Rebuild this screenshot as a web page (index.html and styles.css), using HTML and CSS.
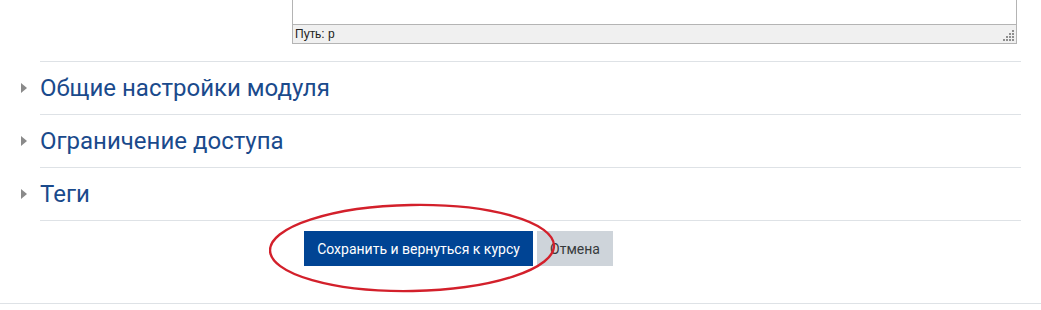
FILE: index.html
```html
<!DOCTYPE html>
<html lang="ru">
<head>
<meta charset="utf-8">
<title>Форма</title>
<link rel="stylesheet" href="styles.css">
</head>
<body>
<div class="page">
  <div class="editor">
    <div class="editor-body"></div>
    <div class="statusbar">
      <span class="path">Путь: p</span>
      <svg class="grip" width="12" height="12" viewBox="0 0 12 12">
        <g fill="#8e8e8e">
          <rect x="9" y="0" width="2" height="2"/>
          <rect x="6" y="3" width="2" height="2"/><rect x="9" y="3" width="2" height="2"/>
          <rect x="3" y="6" width="2" height="2"/><rect x="6" y="6" width="2" height="2"/><rect x="9" y="6" width="2" height="2"/>
          <rect x="0" y="9" width="2" height="2"/><rect x="3" y="9" width="2" height="2"/><rect x="6" y="9" width="2" height="2"/><rect x="9" y="9" width="2" height="2"/>
        </g>
      </svg>
    </div>
  </div>
  <div class="sections">
    <div class="section"><span class="caret"></span><span class="title">Общие настройки модуля</span></div>
    <div class="section"><span class="caret"></span><span class="title">Ограничение доступа</span></div>
    <div class="section"><span class="caret"></span><span class="title">Теги</span></div>
  </div>
  <div class="actions">
    <button class="btn btn-primary">Сохранить и вернуться к курсу</button>
    <button class="btn btn-secondary">Отмена</button>
  </div>
  <div class="footer-line"></div>
  <svg class="mark" width="300" height="100" viewBox="0 0 300 100">
    <ellipse cx="143" cy="46" rx="142" ry="43" fill="none" stroke="#d3202b" stroke-width="2.4" transform="rotate(-1 143 46)"/>
  </svg>
</div>
</body>
</html>
```
FILE: styles.css
```css
html, body { margin: 0; padding: 0; background: #fff; }
body { font-family: Roboto, "Liberation Sans", Arial, sans-serif; }
.page { position: relative; width: 1041px; height: 310px; overflow: hidden; }

.editor { margin-left: 292px; width: 725px; }
.editor-body { height: 24px; border-left: 1px solid #b4b4b4; border-right: 1px solid #b4b4b4; box-sizing: border-box; background: #fff; }
.statusbar { height: 20px; box-sizing: border-box; border: 1px solid #b4b4b4; background: #f0f0f0; display: flex; align-items: center; justify-content: space-between; padding-left: 2px; }
.path { font-family: "Liberation Sans", Arial, sans-serif; font-size: 12px; color: #222; }
.grip { align-self: flex-end; margin-right: 1px; margin-bottom: 1px; }

.sections { margin-left: 40px; width: 981px; margin-top: 17px; border-top: 1px solid #dee2e6; }
.section { height: 52px; border-bottom: 1px solid #dee2e6; display: flex; align-items: center; }
.caret { width: 0; height: 0; border-top: 5px solid transparent; border-bottom: 5px solid transparent; border-left: 6px solid #8a8a8a; margin-left: -19px; margin-right: 13px; }
.title { font-size: 24px; color: #1a4a8c; }

.actions { display: flex; gap: 4px; margin-left: 304px; margin-top: 10px; }
.btn { font-family: Roboto, "Liberation Sans", Arial, sans-serif; font-size: 14px; height: 35px; border: 0; padding: 0 13px; cursor: pointer; }
.btn-primary { background: #004494; color: #fff; width: 229px; }
.btn-secondary { background: #ced4da; color: #373a3c; width: 76px; }

.footer-line { margin-top: 37px; border-top: 1px solid #dee2e6; }
.mark { position: absolute; left: 269px; top: 202px; }
```
